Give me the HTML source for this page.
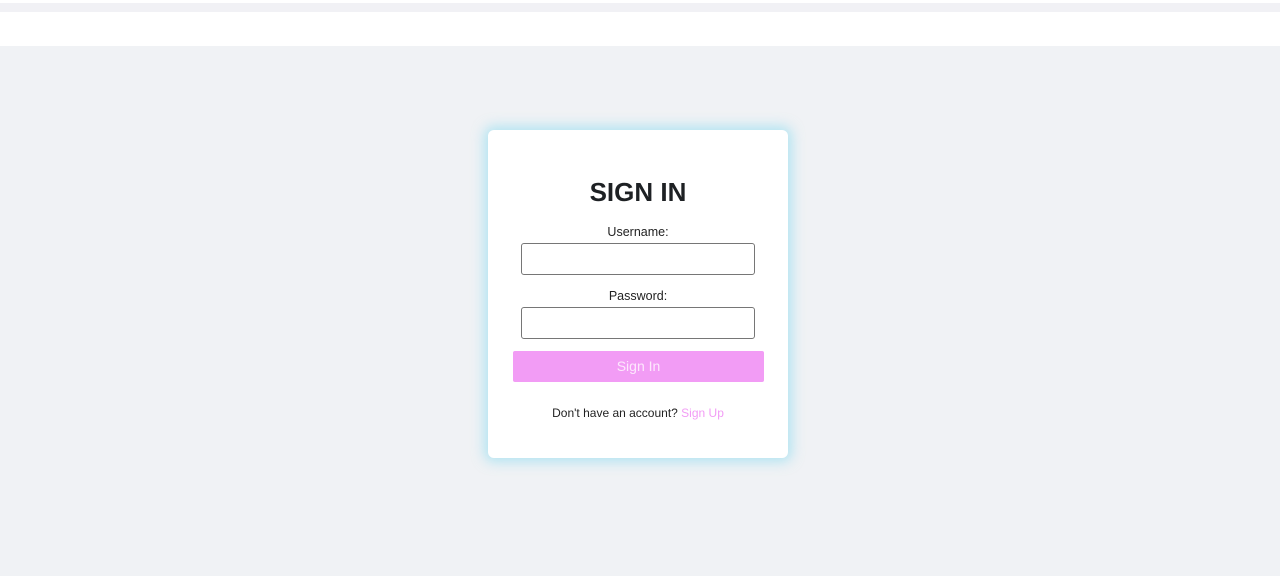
<!DOCTYPE html>
<html><head><style>
body{margin:0;width:1280px;height:576px;background:#f0f2f5;font-family:"Liberation Sans",Arial,sans-serif;position:relative;overflow:hidden}
.top1{position:absolute;left:0;top:0;width:1280px;height:3px;background:#fff}
.top2{position:absolute;left:0;top:3px;width:1280px;height:9px;background:#f1f1f5}
.nav{position:absolute;left:0;top:12px;width:1280px;height:34px;background:#fff}
.card{position:absolute;left:488px;top:130px;width:300px;height:328px;background:#fff;border-radius:6px;box-shadow:0 0 12px 4px rgba(120,215,240,.5)}
h1{position:absolute;left:0;width:300px;top:177px;margin:0;text-align:center;font-size:26px;font-weight:bold;color:#1e2124}
.lbl{position:absolute;left:488px;width:300px;text-align:center;font-size:12.5px;color:#222}
.in{position:absolute;left:521px;width:232px;height:30px;border:1px solid #767676;border-radius:3px;background:#fff}
.btn{position:absolute;left:513px;top:351px;width:251px;height:31px;background:#f29cf5;border-radius:2px;color:#fde8fd;font-size:14px;text-align:center;line-height:31px}
.ft{position:absolute;left:488px;width:300px;top:406px;text-align:center;font-size:12px;color:#222}
.ft span{color:#f29cf5}
</style></head><body>
<div class="top1"></div><div class="top2"></div><div class="nav"></div>
<div class="card"></div>
<h1 style="left:488px">SIGN IN</h1>
<div class="lbl" style="top:225px">Username:</div>
<div class="in" style="top:243px"></div>
<div class="lbl" style="top:289px">Password:</div>
<div class="in" style="top:307px"></div>
<div class="btn">Sign In</div>
<div class="ft">Don't have an account? <span>Sign Up</span></div>
</body></html>
